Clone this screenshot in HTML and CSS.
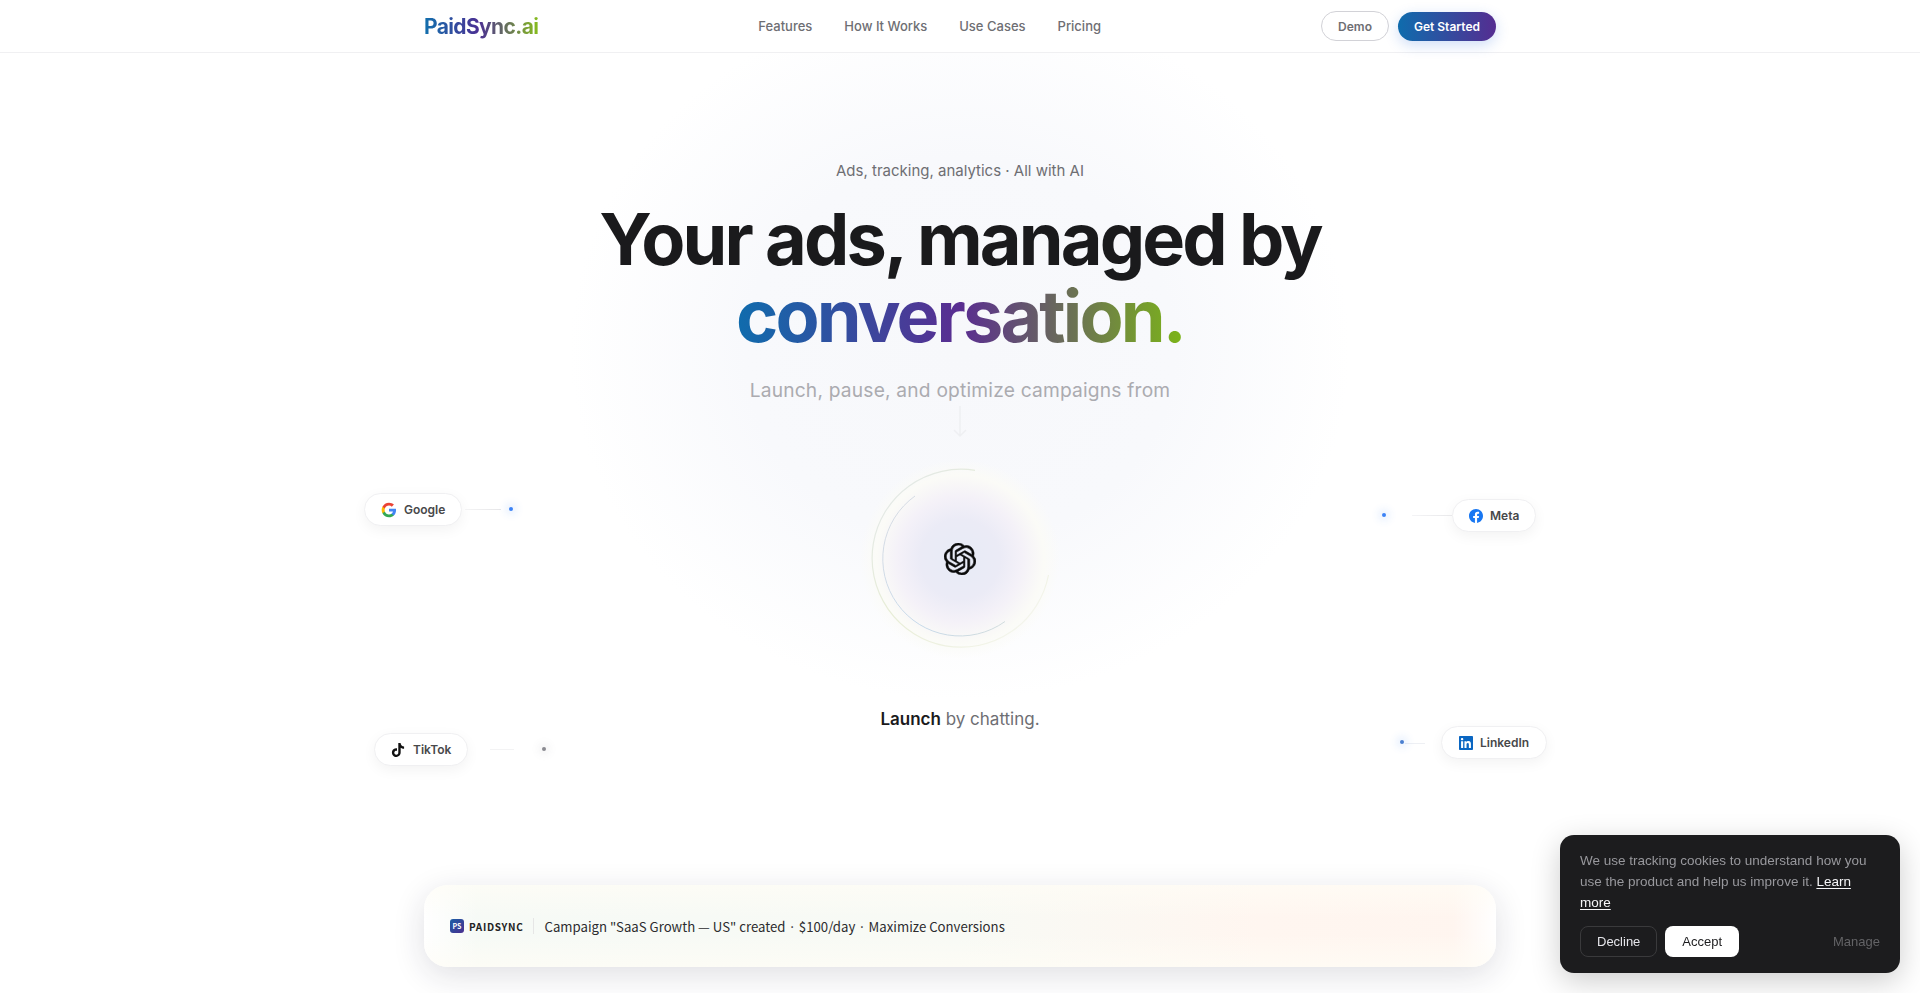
FILE: index.html
```html
<!DOCTYPE html>
<html lang="en">
<head>
  <meta charset="UTF-8">
  <meta name="viewport" content="width=device-width, initial-scale=1.0">
  <title>PaidSync.ai</title>
  <link rel="stylesheet" href="styles.css">
</head>
<body>
  <div class="page-glow"></div>

  <nav class="nav">
    <div class="nav-inner">
      <a class="logo" href="#">PaidSync.ai</a>
      <div class="nav-links">
        <a href="#">Features</a>
        <a href="#">How It Works</a>
        <a href="#">Use Cases</a>
        <a href="#">Pricing</a>
      </div>
      <div class="nav-actions">
        <a class="btn-demo" href="#">Demo</a>
        <a class="btn-start" href="#">Get Started</a>
      </div>
    </div>
  </nav>

  <main class="hero">
    <p class="eyebrow">Ads, tracking, analytics · All with AI</p>
    <h1 class="headline">Your ads, managed by<br><span class="grad-text">conversation.</span></h1>
    <p class="sub">Launch, pause, and optimize campaigns from</p>

    <svg class="arrow" width="16" height="32" viewBox="0 0 16 32" fill="none" stroke="#eeeff2" stroke-width="1.5">
      <path d="M8 0v30M2 24l6 6 6-6"/>
    </svg>

    <div class="stage">
      <!-- platform chips sit on a free canvas around the orb -->
      <div class="chip chip-google">
        <svg width="16" height="16" viewBox="0 0 24 24">
          <path fill="#4285F4" d="M22.56 12.25c0-.78-.07-1.53-.2-2.25H12v4.26h5.92c-.26 1.37-1.04 2.53-2.21 3.31v2.77h3.57c2.08-1.92 3.28-4.74 3.28-8.09z"/>
          <path fill="#34A853" d="M12 23c2.97 0 5.46-.98 7.28-2.66l-3.57-2.77c-.98.66-2.23 1.06-3.71 1.06-2.86 0-5.29-1.93-6.16-4.53H2.18v2.84C3.99 20.53 7.7 23 12 23z"/>
          <path fill="#FBBC05" d="M5.84 14.09c-.22-.66-.35-1.36-.35-2.09s.13-1.43.35-2.09V7.07H2.18C1.43 8.55 1 10.22 1 12s.43 3.45 1.18 4.93l3.66-2.84z"/>
          <path fill="#EA4335" d="M12 5.38c1.62 0 3.06.56 4.21 1.64l3.15-3.15C17.45 2.09 14.97 1 12 1 7.7 1 3.99 3.47 2.18 7.07l3.66 2.84c.87-2.6 3.3-4.53 6.16-4.53z"/>
        </svg>
        Google
      </div>
      <span class="wire wire-google"></span>
      <span class="dot dot-google"></span>

      <div class="chip chip-meta">
        <svg width="14" height="14" viewBox="0 0 24 24">
          <path fill="#1877F2" d="M24 12.073c0-6.627-5.373-12-12-12s-12 5.373-12 12c0 5.99 4.388 10.954 10.125 11.854v-8.385H7.078v-3.47h3.047V9.43c0-3.007 1.792-4.669 4.533-4.669 1.312 0 2.686.235 2.686.235v2.953H15.83c-1.491 0-1.956.925-1.956 1.874v2.25h3.328l-.532 3.47h-2.796v8.385C19.612 23.027 24 18.062 24 12.073z"/>
        </svg>
        Meta
      </div>
      <span class="wire wire-meta"></span>
      <span class="dot dot-meta"></span>

      <div class="chip chip-tiktok">
        <svg width="14" height="14" viewBox="0 0 24 24">
          <path fill="#111" d="M12.525.02c1.31-.02 2.61-.01 3.91-.02.08 1.53.63 3.09 1.75 4.17 1.12 1.11 2.7 1.62 4.24 1.79v4.03c-1.44-.05-2.89-.35-4.2-.97-.57-.26-1.1-.59-1.62-.93-.01 2.92.01 5.84-.02 8.75-.08 1.4-.54 2.79-1.35 3.94-1.31 1.92-3.58 3.17-5.91 3.21-1.43.08-2.86-.31-4.08-1.03-2.02-1.19-3.44-3.37-3.65-5.71-.02-.5-.03-1-.01-1.49.18-1.9 1.12-3.72 2.58-4.96 1.66-1.44 3.98-2.13 6.15-1.72.02 1.48-.04 2.96-.04 4.44-.99-.32-2.15-.23-3.02.37-.63.41-1.11 1.04-1.36 1.75-.21.51-.15 1.07-.14 1.61.24 1.64 1.82 3.02 3.5 2.87 1.12-.01 2.19-.66 2.77-1.61.19-.33.4-.67.41-1.06.1-1.79.06-3.57.07-5.36.01-4.03-.01-8.05.02-12.07z"/>
        </svg>
        TikTok
      </div>
      <span class="wire wire-tiktok"></span>
      <span class="dot dot-tiktok"></span>

      <div class="chip chip-linkedin">
        <svg width="14" height="14" viewBox="0 0 24 24">
          <path fill="#0A66C2" d="M20.447 20.452h-3.554v-5.569c0-1.328-.027-3.037-1.852-3.037-1.853 0-2.136 1.445-2.136 2.939v5.667H9.351V9h3.414v1.561h.046c.477-.9 1.637-1.85 3.37-1.85 3.601 0 4.267 2.37 4.267 5.455v6.286zM5.337 7.433c-1.144 0-2.063-.926-2.063-2.065 0-1.138.92-2.063 2.063-2.063 1.14 0 2.064.925 2.064 2.063 0 1.139-.925 2.065-2.064 2.065zm1.782 13.019H3.555V9h3.564v11.452zM22.225 0H1.771C.792 0 0 .774 0 1.729v20.542C0 23.227.792 24 1.771 24h20.451C23.2 24 24 23.227 24 22.271V1.729C24 .774 23.2 0 22.222 0h.003z"/>
        </svg>
        LinkedIn
      </div>
      <span class="wire wire-linkedin"></span>
      <span class="dot dot-linkedin"></span>

      <div class="orb">
        <svg class="rings" width="200" height="200" viewBox="0 0 200 200" fill="none">
          <defs>
            <linearGradient id="ringOuter" x1="0" y1="0" x2="1" y2="1">
              <stop offset="0" stop-color="#e2e7ec"/>
              <stop offset="0.45" stop-color="#e7edd6"/>
              <stop offset="0.8" stop-color="#f1f3e6"/>
              <stop offset="1" stop-color="#f9f9f9"/>
            </linearGradient>
            <linearGradient id="ringInner" x1="0" y1="0" x2="1" y2="1">
              <stop offset="0" stop-color="#d9dce3"/>
              <stop offset="0.6" stop-color="#c6d9ea"/>
              <stop offset="1" stop-color="#d2dcdc"/>
            </linearGradient>
          </defs>
          <path d="M115 11.3A89 89 0 1 0 188.5 116" stroke="url(#ringOuter)" stroke-width="1.2"/>
          <path d="M55 37A77 77 0 0 0 145 162.5" stroke="url(#ringInner)" stroke-width="1"/>
        </svg>
        <svg class="orb-logo" width="32" height="32" viewBox="0 0 24 24">
          <path fill="#0b0b0b" stroke="#0b0b0b" stroke-width="0.4" d="M22.2819 9.8211a5.9847 5.9847 0 0 0-.5157-4.9108 6.0462 6.0462 0 0 0-6.5098-2.9A6.0651 6.0651 0 0 0 4.9807 4.1818a5.9847 5.9847 0 0 0-3.9977 2.9 6.0462 6.0462 0 0 0 .7427 7.0966 5.98 5.98 0 0 0 .511 4.9107 6.051 6.051 0 0 0 6.5146 2.9001A5.9847 5.9847 0 0 0 13.2599 24a6.0557 6.0557 0 0 0 5.7718-4.2058 5.9894 5.9894 0 0 0 3.9977-2.9001 6.0557 6.0557 0 0 0-.7475-7.0729zm-9.022 12.6081a4.4755 4.4755 0 0 1-2.8764-1.0408l.1419-.0804 4.7783-2.7582a.7948.7948 0 0 0 .3927-.6813v-6.7369l2.02 1.1686a.071.071 0 0 1 .038.052v5.5826a4.504 4.504 0 0 1-4.4945 4.4944zm-9.6607-4.1254a4.4708 4.4708 0 0 1-.5346-3.0137l.142.0852 4.783 2.7582a.7712.7712 0 0 0 .7806 0l5.8428-3.3685v2.3324a.0804.0804 0 0 1-.0332.0615L9.74 19.9502a4.4992 4.4992 0 0 1-6.1408-1.6464zM2.3408 7.8956a4.485 4.485 0 0 1 2.3655-1.9728V11.6a.7664.7664 0 0 0 .3879.6765l5.8144 3.3543-2.0201 1.1685a.0757.0757 0 0 1-.071 0l-4.8303-2.7865A4.504 4.504 0 0 1 2.3408 7.872zm16.5963 3.8558L13.1038 8.364 15.1192 7.2a.0757.0757 0 0 1 .071 0l4.8303 2.7913a4.4944 4.4944 0 0 1-.6765 8.1042v-5.6772a.79.79 0 0 0-.407-.667zm2.0107-3.0231l-.142-.0852-4.7735-2.7818a.7759.7759 0 0 0-.7854 0L9.409 9.2297V6.8974a.0662.0662 0 0 1 .0284-.0615l4.8303-2.7866a4.4992 4.4992 0 0 1 6.6802 4.66zM8.3065 12.863l-2.02-1.1638a.0804.0804 0 0 1-.038-.0567V6.0742a4.4992 4.4992 0 0 1 7.3757-3.4537l-.142.0805L8.704 5.459a.7948.7948 0 0 0-.3927.6813zm1.0976-2.3654l2.602-1.4998 2.6069 1.4998v2.9994l-2.5974 1.4997-2.6067-1.4997Z"/>
        </svg>
      </div>
    </div>

    <p class="caption"><strong>Launch</strong> by chatting.</p>

    <div class="banner">
      <span class="badge">PS</span>
      <span class="brand">PAIDSYNC</span>
      <span class="banner-sep"></span>
      <span class="banner-text">Campaign "SaaS Growth — US" created · $100/day · Maximize Conversions</span>
    </div>
  </main>

  <aside class="cookie">
    <p>We use tracking cookies to understand how you use the product and help us improve it. <a href="#">Learn more</a></p>
    <div class="cookie-actions">
      <button class="cookie-decline">Decline</button>
      <button class="cookie-accept">Accept</button>
      <a class="cookie-manage" href="#">Manage</a>
    </div>
  </aside>
</body>
</html>
```

FILE: styles.css
```css
* {
  box-sizing: border-box;
}

html, body {
  height: 100%;
}

body {
  margin: 0;
  background: #fff;
  font-family: 'Inter', sans-serif;
  color: #1a1a1c;
  overflow: hidden;
}

a {
  text-decoration: none;
  color: inherit;
}

.page-glow {
  position: absolute;
  left: 570px;
  top: 0;
  width: 780px;
  height: 700px;
  background: radial-gradient(closest-side, #f7f8fb 0%, #f8f9fc 55%, rgba(255, 255, 255, 0) 100%);
}

/* Nav */
.nav {
  position: relative;
  height: 53px;
  background: rgba(255, 255, 255, 0.9);
  border-bottom: 1px solid #f0f0f2;
}

.nav-inner {
  width: 1072px;
  height: 52px;
  margin: 0 auto;
  display: flex;
  align-items: center;
  justify-content: space-between;
}

.logo {
  font-size: 21px;
  font-weight: 700;
  letter-spacing: -0.03em;
  background: linear-gradient(90deg, #1270ad 0%, #4b2f93 48%, #86bc1e 100%);
  -webkit-background-clip: text;
  background-clip: text;
  color: transparent;
}

.nav-links {
  display: flex;
  gap: 32px;
  font-size: 13px;
  font-weight: 500;
  color: #6e6e73;
}

.nav-actions {
  display: flex;
  align-items: center;
  gap: 9px;
}

.btn-demo {
  height: 30px;
  padding: 0 16px;
  display: flex;
  align-items: center;
  font-size: 12px;
  font-weight: 600;
  color: #6e6e73;
  border: 1px solid #d2d2d7;
  border-radius: 15px;
}

.btn-start {
  height: 29px;
  padding: 0 16px;
  display: flex;
  align-items: center;
  font-size: 12px;
  font-weight: 600;
  color: #fff;
  background: linear-gradient(90deg, #0f6cad, #552d91);
  border-radius: 15px;
  box-shadow: 0 4px 14px rgba(30, 100, 220, 0.22);
}

/* Hero */
.hero {
  position: relative;
  display: flex;
  flex-direction: column;
  align-items: center;
  padding-top: 108px;
}

.eyebrow {
  margin: 0;
  font-size: 15px;
  line-height: 20px;
  color: #6e6e73;
}

.headline {
  margin: 19px 0 0;
  font-size: 72px;
  line-height: 77px;
  font-weight: 700;
  letter-spacing: -0.04em;
  text-align: center;
  color: #1a1a1c;
}

.grad-text {
  background: linear-gradient(90deg, #0f6cad 0%, #5a2d91 50%, #7cb518 100%);
  -webkit-background-clip: text;
  background-clip: text;
  color: transparent;
}

.sub {
  margin: 22px 0 0;
  font-size: 19.2px;
  line-height: 28px;
  letter-spacing: 0.01em;
  color: #ababb0;
}

.arrow {
  margin-top: 2px;
  display: block;
}

.stage {
  position: relative;
  width: 100%;
  height: 0;
}

.orb {
  position: absolute;
  left: 860px;
  top: 21px;
  width: 200px;
  height: 200px;
  display: flex;
  align-items: center;
  justify-content: center;
  border-radius: 50%;
  background: radial-gradient(closest-side, #e7ebf6 0%, #ebebf6 40%, #f4f1f8 62%, #fbfbf7 84%, rgba(255, 255, 255, 0) 100%);
}

.rings {
  position: absolute;
  left: 0;
  top: 0;
}

.orb-logo {
  position: relative;
}

.chip {
  position: absolute;
  height: 33px;
  display: flex;
  align-items: center;
  gap: 7px;
  padding: 0 16px;
  background: #fff;
  border: 1px solid #f0f0f2;
  border-radius: 17px;
  box-shadow: 0 4px 14px rgba(0, 0, 0, 0.05);
  font-size: 12px;
  font-weight: 600;
  color: #48484a;
}

.chip-google { left: 364px; top: 55px; }
.chip-meta { left: 1452px; top: 61px; }
.chip-tiktok { left: 374px; top: 295px; gap: 8px; }
.chip-linkedin { left: 1441px; top: 288px; padding: 0 17px; }

.wire {
  position: absolute;
  height: 1px;
}

.wire-google { left: 465px; top: 71px; width: 36px; background: linear-gradient(90deg, #f4f4f5, #e6e6e8); }
.wire-meta { left: 1412px; top: 77px; width: 40px; background: linear-gradient(90deg, #f4f4f6, #e8e8ea); }
.wire-tiktok { left: 490px; top: 311px; width: 24px; background: #f3f3f4; }
.wire-linkedin { left: 1405px; top: 305px; width: 20px; background: #eef0f4; }

.dot {
  position: absolute;
  width: 4px;
  height: 4px;
  border-radius: 50%;
  background: #3b82f6;
  box-shadow: 0 0 8px 3px rgba(59, 130, 246, 0.16);
}

.dot-google { left: 509px; top: 69px; }
.dot-meta { left: 1382px; top: 75px; }
.dot-tiktok { left: 542px; top: 309px; background: #8a8a90; box-shadow: 0 0 8px 3px rgba(120, 120, 130, 0.12); }
.dot-linkedin { left: 1400px; top: 302px; background: #4a7fd0; }

.caption {
  margin: 268px 0 0;
  font-size: 17px;
  line-height: 26px;
  color: #6e6e73;
}

.caption strong {
  font-weight: 600;
  color: #1a1a1c;
}

/* Bottom banner */
.banner {
  width: 1072px;
  height: 82px;
  margin-top: 153px;
  padding: 0 26px;
  display: flex;
  align-items: center;
  border-radius: 24px;
  background:
    linear-gradient(180deg, rgba(255, 253, 246, 0.7), rgba(255, 255, 255, 0) 40%, rgba(255, 255, 255, 0) 60%, rgba(255, 253, 246, 0.7)),
    linear-gradient(90deg, #fff 0%, rgba(255, 255, 255, 0) 5%, rgba(255, 255, 255, 0) 96%, #fff 100%),
    linear-gradient(90deg, #f6faf6 0%, #f8faf5 50%, #fff6f0 78%, #fff5ef 100%);
  box-shadow: 0 8px 32px rgba(30, 30, 60, 0.14);
  font-family: 'Noto Sans CJK JP', sans-serif;
}

.badge {
  width: 14px;
  height: 14px;
  display: flex;
  align-items: center;
  justify-content: center;
  border-radius: 3px;
  background: linear-gradient(135deg, #1a5fa6, #4b2f8f);
  color: #fff;
  font-size: 7px;
  font-weight: 700;
}

.brand {
  margin-left: 5px;
  font-size: 10px;
  font-weight: 700;
  letter-spacing: 0.07em;
  color: #222;
}

.banner-sep {
  width: 1px;
  height: 16px;
  margin: 0 10px;
  background: #e6e6e6;
}

.banner-text {
  font-size: 13.2px;
  color: #2c2c2e;
}

/* Cookie card */
.cookie {
  position: fixed;
  right: 20px;
  bottom: 20px;
  width: 340px;
  height: 138px;
  padding: 16px 20px;
  background: #1c1c1e;
  border-radius: 14px;
  box-shadow: 0 8px 30px rgba(0, 0, 0, 0.2);
  font-family: 'Liberation Sans', sans-serif;
}

.cookie p {
  margin: 0;
  font-size: 13.5px;
  line-height: 20.8px;
  color: #98989d;
}

.cookie p a {
  color: #f5f5f7;
  text-decoration: underline;
  text-underline-offset: 2px;
}

.cookie-actions {
  display: flex;
  align-items: center;
  gap: 8px;
  margin-top: 13px;
}

.cookie-actions button {
  height: 31px;
  font-family: inherit;
  font-size: 13px;
  border-radius: 8px;
}

.cookie-decline {
  padding: 0 16px;
  background: transparent;
  border: 1px solid #3a3a3c;
  color: #e5e5ea;
}

.cookie-accept {
  padding: 0 17px;
  background: #fff;
  border: 0;
  color: #1c1c1e;
}

.cookie-manage {
  margin-left: auto;
  font-size: 13px;
  color: #636366;
}
```
